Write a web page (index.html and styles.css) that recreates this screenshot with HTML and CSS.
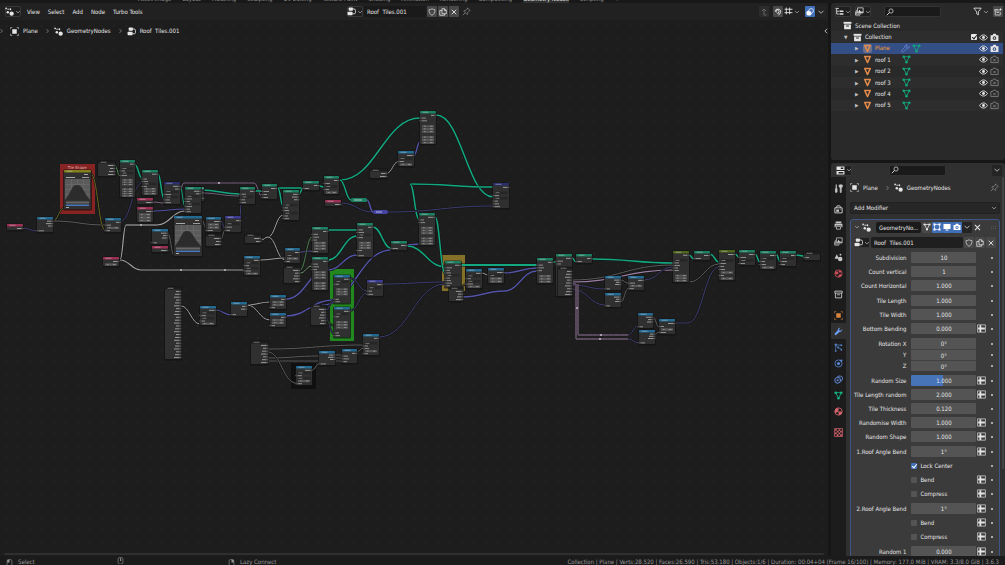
FILE: index.html
```html
<!DOCTYPE html>
<html lang="en">
<head>
<meta charset="utf-8">
<title>Roof Tiles - Geometry Nodes</title>
<link rel="stylesheet" href="styles.css">
</head>
<body>
<svg class="sprite" aria-hidden="true">
  <symbol id="i-down" viewBox="0 0 16 16"><path d="M3 5.5l5 5 5-5" fill="none" stroke="currentColor" stroke-width="2"/></symbol>
  <symbol id="i-right" viewBox="0 0 16 16"><path d="M5 2l6 6-6 6" fill="none" stroke="currentColor" stroke-width="2"/></symbol>
  <symbol id="i-left" viewBox="0 0 16 16"><path d="M11 2L5 8l6 6" fill="none" stroke="currentColor" stroke-width="2"/></symbol>
  <symbol id="i-nodes" viewBox="0 0 16 16"><g fill="currentColor"><circle cx="11.8" cy="11.8" r="3.8"/><circle cx="5" cy="9.5" r="2.2"/><circle cx="9.5" cy="4" r="1.6"/><circle cx="2" cy="2.5" r="1.5"/><circle cx="5.5" cy="3.8" r="1.3"/></g></symbol>
  <symbol id="i-group" viewBox="0 0 16 16"><g fill="currentColor"><rect x="3" y="1" width="7.500" height="5.500" rx="1.200"/><rect x="1" y="8.500" width="9" height="6" rx="1.200"/></g><path d="M10 3.500h2.500a2.500 2.500 0 0 1 2.500 2.500v4a2 2 0 0 1-2 2h-3" fill="none" stroke="currentColor" stroke-width="1.500"/></symbol>
  <symbol id="i-object" viewBox="0 0 16 16"><rect x="4" y="4" width="8" height="8" fill="currentColor"/><path d="M1 4V1h3M12 1h3v3M15 12v3h-3M4 15H1v-3" fill="none" stroke="currentColor" stroke-width="1.300" opacity=".75"/></symbol>
  <symbol id="i-shield" viewBox="0 0 16 16"><path d="M8 1.500C6 3 4 3.200 2 3.200c0 6 2 9.500 6 11.300 4-1.800 6-5.300 6-11.300-2 0-4-.2-6-1.700z" fill="none" stroke="currentColor" stroke-width="1.300"/></symbol>
  <symbol id="i-copy" viewBox="0 0 16 16"><path d="M6 1.500h5l3.500 3.500v6.500H6zM11 1.500V5h3.500M6 5H1.500v9.500H11v-3" fill="none" stroke="currentColor" stroke-width="1.500"/></symbol>
  <symbol id="i-x" viewBox="0 0 16 16"><path d="M3.500 3.500l9 9M12.500 3.500l-9 9" stroke="currentColor" stroke-width="1.800"/></symbol>
  <symbol id="i-pin" viewBox="0 0 16 16"><path d="M9.500 1.500l5 5-1.500.5-3 3 .3 2.500-1 1L3 7.200l1-1 2.500.3 3-3zM6 10l-4.500 4.500" fill="none" stroke="currentColor" stroke-width="1.300"/></symbol>
  <symbol id="i-up" viewBox="0 0 16 16"><path d="M4 6l4-4 4 4M8 2v12h5" fill="none" stroke="currentColor" stroke-width="1.800"/></symbol>
  <symbol id="i-magnet" viewBox="0 0 16 16"><path d="M2.500 7a5.300 5.300 0 1 1 10.200 2.500c-1 2-2.200 3.500-3.700 5M5.500 9a3 3 0 1 1 4.500-1.500c-.6 1.500-1.500 3-3 4.500" fill="none" stroke="currentColor" stroke-width="2"/></symbol>
  <symbol id="i-snap" viewBox="0 0 16 16"><path d="M4 1v12M10 1v12M1 4h14M1 10h14" stroke="currentColor" stroke-width="1.600"/></symbol>
  <symbol id="i-overlay" viewBox="0 0 16 16"><circle cx="6" cy="10" r="5.200" fill="currentColor"/><circle cx="10.300" cy="5.700" r="4.600" fill="none" stroke="currentColor" stroke-width="1.400"/><path d="M6 5a5 5 0 0 1 5 5" fill="none" stroke="#3f6cb5" stroke-width="1.200"/></symbol>
  <symbol id="i-tree" viewBox="0 0 16 16"><path d="M1 2.500h6M3 3v9.500h4M3 7.500h4" fill="none" stroke="currentColor" stroke-width="1.500"/><path d="M8 7.500h7M8 12.500h7" stroke="currentColor" stroke-width="2.600"/></symbol>
  <symbol id="i-images" viewBox="0 0 16 16"><path d="M4.500 1.500h10v9h-10z" fill="none" stroke="currentColor" stroke-width="1.300"/><path d="M2.500 5v7.500H11M1 8v6.500h8" fill="none" stroke="currentColor" stroke-width="1.200"/><path d="M5 10l3-5 3 4 1.500-2 2 3z" fill="currentColor"/></symbol>
  <symbol id="i-search" viewBox="0 0 16 16"><circle cx="10" cy="6" r="4.200" fill="none" stroke="currentColor" stroke-width="1.400"/><path d="M7 9l-5.500 5.500" stroke="currentColor" stroke-width="1.800"/></symbol>
  <symbol id="i-filter" viewBox="0 0 16 16"><path d="M1.500 2h13L9.500 8.500V14l-3-2V8.500z" fill="none" stroke="currentColor" stroke-width="1.500"/></symbol>
  <symbol id="i-new" viewBox="0 0 16 16"><path d="M9 3H1.500v3h10M2.500 6v8h10V8M5 9h5" fill="none" stroke="currentColor" stroke-width="1.400"/><path d="M13 .5v5M10.500 3h5" stroke="currentColor" stroke-width="1.500"/></symbol>
  <symbol id="i-box" viewBox="0 0 16 16"><path d="M1 1.500h14V5H1z" fill="currentColor"/><path d="M2 6h12v8.500H2zM5.500 8v1.800h5V8z" fill="currentColor" fill-rule="evenodd"/></symbol>
  <symbol id="i-boxline" viewBox="0 0 16 16"><path d="M1.500 2h13v3.500h-13zM2.500 5.500V14h11V5.500M5.500 8.500h5" fill="none" stroke="currentColor" stroke-width="1.500"/></symbol>
  <symbol id="i-tri" viewBox="0 0 16 16"><path d="M3 2.500h10L8 13.500z" fill="none" stroke="currentColor" stroke-width="2.600" stroke-linejoin="round"/></symbol>
  <symbol id="i-mesh" viewBox="0 0 16 16"><path d="M3 3h10L8 13z" fill="none" stroke="currentColor" stroke-width="1.500"/><g fill="currentColor"><circle cx="3" cy="3" r="2.200"/><circle cx="13" cy="3" r="2.200"/><circle cx="8" cy="13" r="2.200"/></g></symbol>
  <symbol id="i-wrench" viewBox="0 0 16 16"><path d="M14.500 4l-2.700 2.600-2.300-.5-.5-2.300L11.500 1.300C9 .6 6.500 2.500 6.800 5.600L1.600 11a2 2 0 0 0 0 2.800 2 2 0 0 0 2.800 0l5.200-5.100c3 .5 5.500-2 4.900-4.700z" fill="currentColor"/></symbol>
  <symbol id="i-wrenchline" viewBox="0 0 16 16"><path d="M14.500 4l-2.700 2.600-2.300-.5-.5-2.300L11.500 1.300C9 .6 6.500 2.500 6.800 5.600L1.600 11a2 2 0 0 0 0 2.800 2 2 0 0 0 2.800 0l5.200-5.100c3 .5 5.500-2 4.900-4.700z" fill="none" stroke="currentColor" stroke-width="1.600"/></symbol>
  <symbol id="i-eye" viewBox="0 0 16 16"><path d="M1 8c3.500-6 10.500-6 14 0-3.500 6-10.500 6-14 0z" fill="none" stroke="currentColor" stroke-width="1.700"/><circle cx="8" cy="8" r="2.600" fill="currentColor"/></symbol>
  <symbol id="i-cam" viewBox="0 0 16 16"><path d="M1 4h3.500L6 1.500h4L11.500 4H15v10H1zM8 5.800a3.200 3.200 0 1 0 .01 0z" fill="currentColor" fill-rule="evenodd"/><circle cx="8" cy="9" r="1.500" fill="currentColor"/></symbol>
  <symbol id="i-camoff" viewBox="0 0 16 16"><path d="M1.500 4.500h3L6 2h4l1.500 2.500h3v9h-13zM5.800 6.800l4.400 4.400M10.200 6.800l-4.400 4.400" fill="none" stroke="currentColor" stroke-width="1.400"/></symbol>
  <symbol id="i-props" viewBox="0 0 16 16"><path d="M1 1h14v6H1zM1 9h14v6H1z" fill="currentColor"/><path d="M8.500 2.500H13v3H8.500zM4.500 10.500H13v3H4.500z" fill="#222"/></symbol>
  <symbol id="i-tool" viewBox="0 0 16 16"><path d="M4 1v6M4 8v7" stroke="currentColor" stroke-width="2"/><path d="M2.500 8h3v6.500h-3zM9 1.500v3.500l2 2v8h2V7l2-2V1.500M11 1v3h2V1" fill="currentColor" stroke="currentColor"/></symbol>
  <symbol id="i-render" viewBox="0 0 16 16"><path d="M1.500 5h13v9h-13zM4 5l1.500-3.500h5L12 5" fill="none" stroke="currentColor" stroke-width="1.700"/><path d="M4 8h5v4H4z" fill="currentColor"/><path d="M12 7v2" stroke="currentColor"/></symbol>
  <symbol id="i-output" viewBox="0 0 16 16"><path d="M3 1h10v3H3zM1 5h14v6h-2V8H3v3H1z" fill="currentColor"/><path d="M4.500 9.500h7v5h-7z" fill="none" stroke="currentColor" stroke-width="1.400"/></symbol>
  <symbol id="i-world" viewBox="0 0 16 16"><circle cx="8" cy="8" r="6.500" fill="none" stroke="currentColor" stroke-width="1.500"/><path d="M2 4l5 1 1 3-3 2-3-2zM9 2l4 2-2 3-3-2zM8 11l3-2 3 1-3 4-3 1z" fill="currentColor"/></symbol>
  <symbol id="i-scene" viewBox="0 0 16 16"><path d="M5 2L1 10h8z" fill="currentColor"/><circle cx="11" cy="10.500" r="4" fill="currentColor"/><circle cx="11.500" cy="3" r="1.600" fill="currentColor"/></symbol>
  <symbol id="i-part" viewBox="0 0 16 16"><path d="M3 14V3l4 5 6 3M3 3l10 1" fill="none" stroke="currentColor" stroke-width="1.200"/><g fill="currentColor"><circle cx="3" cy="3" r="2"/><circle cx="13" cy="4" r="1.600"/><circle cx="7.500" cy="8" r="1.800"/><circle cx="13" cy="12" r="1.600"/><circle cx="3" cy="14" r="1.600"/></g></symbol>
  <symbol id="i-phys" viewBox="0 0 16 16"><circle cx="8" cy="8" r="6.300" fill="none" stroke="currentColor" stroke-width="1.400"/><circle cx="8" cy="8" r="2.800" fill="currentColor"/><circle cx="13" cy="3" r="2" fill="currentColor"/></symbol>
  <symbol id="i-cons" viewBox="0 0 16 16"><circle cx="6.500" cy="9.500" r="5" fill="none" stroke="currentColor" stroke-width="1.800"/><circle cx="6.500" cy="9.500" r="2" fill="currentColor"/><path d="M6 4c2-3 7-3 8.500 0S14 10 12 11" fill="none" stroke="currentColor" stroke-width="1.800"/></symbol>
  <symbol id="i-mat" viewBox="0 0 16 16"><circle cx="8" cy="8" r="6.500" fill="none" stroke="currentColor" stroke-width="1.500"/><path d="M8 1.500A6.500 6.500 0 0 0 2 11l6-3zM8 8h6.500A6.500 6.500 0 0 1 8 14.500z" fill="currentColor"/></symbol>
  <symbol id="i-tex" viewBox="0 0 16 16"><path d="M1 1h14v14H1z" fill="none" stroke="currentColor" stroke-width="1.400"/><path d="M2 2h3v3H2zM8 2h3v3H8zM5 5h3v3H5zM11 5h3v3h-3zM2 8h3v3H2zM8 8h3v3H8zM5 11h3v3H5zM11 11h3v3h-3z" fill="currentColor"/></symbol>
  <symbol id="i-edit" viewBox="0 0 16 16"><path d="M3 3h10v10H3z" fill="none" stroke="currentColor" stroke-width="1.300"/><path d="M1 1h4v4H1zM11 1h4v4h-4zM1 11h4v4H1zM11 11h4v4h-4z" fill="currentColor"/></symbol>
  <symbol id="i-screen" viewBox="0 0 16 16"><path d="M1 2h14v10H1zM5 13h6v2H5z" fill="currentColor"/></symbol>
  <symbol id="i-attr" viewBox="0 0 16 16"><path d="M1 1.500h14v13H1z" fill="none" stroke="currentColor" stroke-width="1.500" opacity=".8"/><path d="M6 2v12M2 8h12" stroke="currentColor" stroke-width="3.200"/></symbol>
  <symbol id="i-mouse" viewBox="0 0 16 16"><rect x="2.500" y="1" width="11" height="15" rx="4" fill="none" stroke="currentColor" stroke-width="1.400"/></symbol>
</svg>

<nav class="workspaces">
  <a href="#">Asset Image</a><a href="#">Layout</a><a href="#">Modeling</a><a href="#">Sculpting</a><a href="#">UV Editing</a><a href="#">Texture Paint</a><a href="#">Shading</a><a href="#">Animation</a><a href="#">Rendering</a><a href="#">Compositing</a><a href="#" class="current">Geometry Nodes</a><a href="#">Scripting</a><a href="#">+</a>
</nav>

<main class="workspace">
  <section class="editor">
    <header class="bar node-bar">
      <div class="menus">
        <button class="pick" aria-label="Editor type"><svg><use href="#i-nodes"/></svg><svg class="chev"><use href="#i-down"/></svg></button>
        <button>View</button><button>Select</button><button>Add</button><button>Node</button><button>Turbo Tools</button>
      </div>
      <div class="datablock">
        <button class="pick" aria-label="Browse node tree"><svg><use href="#i-group"/></svg><svg class="chev"><use href="#i-down"/></svg></button>
        <input class="name" type="text" value="Roof  Tiles.001" aria-label="Node tree name">
        <button class="sq" aria-label="Fake user"><svg><use href="#i-shield"/></svg></button>
        <button class="sq" aria-label="Duplicate"><svg><use href="#i-copy"/></svg></button>
        <button class="sq" aria-label="Unlink"><svg><use href="#i-x"/></svg></button>
        <button class="pin" aria-label="Pin"><svg><use href="#i-pin"/></svg></button>
      </div>
      <div class="tools">
        <button class="sq faint" aria-label="Parent tree"><svg><use href="#i-up"/></svg></button>
        <button class="sq" aria-label="Snap"><svg><use href="#i-magnet"/></svg></button>
        <button class="pick flat" aria-label="Snap to"><svg><use href="#i-snap"/></svg><svg class="chev"><use href="#i-down"/></svg></button>
        <button class="sq on" aria-label="Overlays"><svg><use href="#i-overlay"/></svg></button>
        <button class="sq dark" aria-label="Overlay options"><svg class="chev"><use href="#i-down"/></svg></button>
      </div>
    </header>
    <div class="canvas">
      <svg class="graph" id="graph" role="img" aria-label="Node graph"></svg>
      <div class="crumbs">
        <svg class="sep"><use href="#i-right"/></svg>
        <svg><use href="#i-object"/></svg><span>Plane</span>
        <svg class="sep"><use href="#i-right"/></svg>
        <svg><use href="#i-nodes"/></svg><span>GeometryNodes</span>
        <svg class="sep"><use href="#i-right"/></svg>
        <svg><use href="#i-group"/></svg><span>Roof&nbsp; Tiles.001</span>
        <button class="side-toggle" aria-label="Show sidebar"><svg><use href="#i-left"/></svg></button>
      </div>
      <div class="hscroll"></div>
    </div>
  </section>

  <aside class="column">
    <section class="outliner">
      <header class="bar">
        <button class="pick" aria-label="Editor type"><svg><use href="#i-tree"/></svg><svg class="chev"><use href="#i-down"/></svg></button>
        <button class="pick" aria-label="Display mode"><svg><use href="#i-images"/></svg><svg class="chev"><use href="#i-down"/></svg></button>
        <label class="search"><svg><use href="#i-search"/></svg><input type="text" aria-label="Filter outliner"></label>
        <button class="pick flat" aria-label="Filter"><svg><use href="#i-filter"/></svg><svg class="chev"><use href="#i-down"/></svg></button>
        <button class="sq" aria-label="New collection"><svg><use href="#i-new"/></svg></button>
      </header>
      <ul class="tree" id="tree"></ul>
    </section>

    <section class="properties">
      <header class="bar">
        <button class="pick" aria-label="Editor type"><svg><use href="#i-props"/></svg><svg class="chev"><use href="#i-down"/></svg></button>
        <label class="search"><svg><use href="#i-search"/></svg><input type="text" aria-label="Search properties"></label>
        <button class="sq dark" aria-label="Options"><svg class="chev"><use href="#i-down"/></svg></button>
      </header>
      <div class="split">
        <nav class="tabs" id="tabs"></nav>
        <div class="pane">
          <div class="path">
            <svg><use href="#i-object"/></svg><span>Plane</span>
            <svg class="sep"><use href="#i-right"/></svg>
            <svg><use href="#i-nodes"/></svg><span>GeometryNodes</span>
            <button class="pin" aria-label="Pin"><svg><use href="#i-pin"/></svg></button>
          </div>
          <div class="add"><select aria-label="Add Modifier"><option>Add Modifier</option></select><svg class="chev"><use href="#i-down"/></svg></div>
          <div class="modifier">
            <div class="mod-head">
              <button aria-label="Collapse"><svg class="chev"><use href="#i-down"/></svg></button>
              <svg class="kind"><use href="#i-nodes"/></svg>
              <input class="name" type="text" value="GeometryNo..." aria-label="Modifier name">
              <button class="sq" aria-label="On cage"><svg><use href="#i-mesh"/></svg></button>
              <button class="sq on" aria-label="Edit mode"><svg><use href="#i-edit"/></svg></button>
              <button class="sq on" aria-label="Viewport"><svg><use href="#i-screen"/></svg></button>
              <button class="sq on" aria-label="Render"><svg><use href="#i-cam"/></svg></button>
              <button class="sq dark" aria-label="More"><svg class="chev"><use href="#i-down"/></svg></button>
              <button class="close" aria-label="Remove modifier"><svg><use href="#i-x"/></svg></button>
              <span class="grip"></span>
            </div>
            <div class="mod-tree">
              <button class="pick" aria-label="Browse"><svg><use href="#i-group"/></svg><svg class="chev"><use href="#i-down"/></svg></button>
              <input class="name" type="text" value="Roof  Tiles.001" aria-label="Node group">
              <button class="sq" aria-label="Fake user"><svg><use href="#i-shield"/></svg></button>
              <button class="sq" aria-label="Duplicate"><svg><use href="#i-copy"/></svg></button>
              <button class="sq" aria-label="Unlink"><svg><use href="#i-x"/></svg></button>
            </div>
            <form class="fields" id="fields"></form>
          </div>
        </div>
        <div class="vscroll"><span></span></div>
      </div>
    </section>
  </aside>
</main>

<footer class="status">
  <span class="hint"><svg viewBox="0 0 16 16"><use href="#i-mouse"/><path d="M3 2h5v6H3z" fill="currentColor"/></svg>Select</span>
  <span class="hint"><svg viewBox="0 0 16 16"><use href="#i-mouse"/><path d="M7 3h2.500v6H7z" fill="currentColor"/></svg></span>
  <span class="hint"><svg viewBox="0 0 16 16"><use href="#i-mouse"/><path d="M8 2h5v6H8z" fill="currentColor"/></svg>Lazy Connect</span>
  <span class="stats">Collection | Plane | Verts:28.520 | Faces:26.590 | Tris:53.180 | Objects:1/6 | Duration: 00:04+04 (Frame 16/100) | Memory: 177.0 MiB | VRAM: 3.3/8.0 GiB | 3.6.3</span>
</footer>
<script src="app.js"></script>
</body>
</html>
```
FILE: styles.css
```css
* { box-sizing: border-box; }
html, body { height: 100%; }
body {
  margin: 0;
  display: flex;
  flex-direction: column;
  overflow: hidden;
  background: #161616;
  color: #e6e6e6;
  font: 6px/10px "DejaVu Sans Condensed", "DejaVu Sans", sans-serif;
}
button, input, select { font: inherit; color: inherit; border: 0; margin: 0; padding: 0; background: none; }
button { display: inline-flex; align-items: center; justify-content: center; }
input { min-width: 0; }
svg { display: block; flex: none; width: 9px; height: 9px; }
.sprite { position: absolute; width: 0; height: 0; }
svg.chev { width: 6px; height: 6px; color: #b0b0b0; }

/* workspace tabs, scrolled mostly out of view */
.workspaces {
  flex: none;
  display: flex;
  align-items: flex-end;
  gap: 11px;
  height: 3px;
  padding-left: 138px;
  overflow: hidden;
  background: #181818;
}
.workspaces a { color: #909090; text-decoration: none; white-space: nowrap; line-height: 8px; }
.workspaces .current { background: #303030; color: #e8e8e8; }

.workspace { flex: 1; min-height: 0; display: flex; gap: 3px; }

/* shared bars and buttons */
.bar { flex: none; height: 16px; display: flex; align-items: center; }
.pick { height: 11px; width: 16px; gap: 1px; border: 1px solid #383838; border-radius: 2px; background: #1f1f1f; }
.pick.flat { border: 0; background: none; }
.sq { width: 10px; height: 11px; background: #484848; border-radius: 1px; }
.sq svg { width: 8px; height: 8px; }
.sq.on { background: #4270b8; color: #fff; }
.sq.dark { background: #242424; }
.sq.faint { background: #2c2c2c; color: #6a6a6a; }
.name { height: 11px; background: #1a1a1a; padding-left: 3px; white-space: pre; border-radius: 2px; }
.search { display: flex; align-items: center; width: 57px; height: 11px; padding-left: 1px; border: 1px solid #333; border-radius: 2px; background: #1a1a1a; }
.search svg { width: 8px; height: 8px; }
.search input { width: 40px; height: 9px; }
.pin { color: #8a8a8a; width: 12px; }

/* node editor */
.editor { flex: 1; min-width: 0; display: flex; flex-direction: column; background: #1d1d1d; }
.node-bar { display: grid; grid-template-columns: 57fr auto 59fr; background: #212121; padding: 0 2px 0 5px; height: 17px; }
.menus { display: flex; align-items: center; gap: 8px; }
.menus .pick { margin-right: -2px; }
.datablock { display: flex; align-items: center; gap: 1px; }
.datablock .name { width: 62px; }
.tools { display: flex; align-items: center; justify-content: flex-end; gap: 1px; }
.tools .faint { margin-right: 3px; }
.tools .on { margin-left: 4px; }
.canvas {
  flex: 1;
  min-height: 0;
  position: relative;
  display: flex;
  flex-direction: column;
  justify-content: space-between;
  background-image: radial-gradient(circle, #232323 1px, transparent 1px);
  background-size: 12px 12px;
}
.graph { position: absolute; top: -20px; left: 0; width: 100%; height: calc(100% + 20px); }
.crumbs { position: relative; display: flex; align-items: center; gap: 4px; height: 22px; }
.crumbs .sep, .path .sep { width: 5px; height: 6px; margin: 0 0 0 3px; color: #a8a8a8; }
.crumbs .sep:first-child { margin-left: -1px; margin-right: 2px; }
.side-toggle { margin-left: auto; width: 5px; }
.side-toggle svg { width: 6px; height: 6px; }
.hscroll { height: 2px; margin: 0 4px 1px; border-radius: 1px; background: #2f2f2f; }

/* outliner */
.column { flex: none; width: 174px; display: flex; flex-direction: column; gap: 3px; }
.outliner { flex: none; height: 157px; background: #292929; border-radius: 3px; padding-right: 2px; }
.outliner .bar { padding-left: 4px; gap: 4px; height: 17px; }
.outliner .search { margin-left: 9px; margin-right: auto; }
.tree { list-style: none; margin: 0; padding: 0; height: 91px; display: grid; grid-auto-rows: 1fr; }
.tree li { display: flex; align-items: center; gap: 3px; padding: 0 4px 0 24px; }
.tree li:nth-child(even) { background: #2d2d2d; }
.tree li.selected { background: #334f86; }
.tree .root { padding-left: 12px; }
.tree .coll { padding-left: 13px; }
.tree .arrow { width: 5px; color: #c0c0c0; font-size: 5px; }
.tree .coll .arrow { margin-right: 1px; }
.tree .tri { color: #e08a4c; }
.tree .selected .tri { background: #6a6f8a; border-radius: 2px; }
.tree .selected .label { color: #ffa028; }
.tree .label { width: 27px; }
.tree .coll .label, .tree .root .label { width: auto; }
.tree .mesh { color: #13a77c; margin-left: -3px; }
.tree .wr { color: #6482cf; margin-left: -4px; }
.tree .selected .mesh { margin-left: -1px; }
.tree .vis { margin-left: auto; display: flex; align-items: center; gap: 2px; }
.tree .vis .off { color: #8a8a8a; }
.tree .vis svg { width: 9px; height: 9px; }
input[type="checkbox"] { appearance: none; width: 6px; height: 6px; border-radius: 1px; background: #545454; }
.tree input[type="checkbox"]:checked { background: #ececec; }
input[type="checkbox"]:checked::after { content: ""; display: block; width: 2px; height: 4px; margin: 0 auto; border: solid #fff; border-width: 0 1px 1px 0; transform: rotate(40deg); }
.tree input[type="checkbox"]:checked::after { border-color: #222; }

/* properties */
.properties { flex: 1; min-height: 0; display: flex; flex-direction: column; background: #303030; border-radius: 3px 3px 0 0; overflow: hidden; }
.properties .bar { padding: 0 3px 0 5px; justify-content: space-between; height: 14px; }
.properties .bar .search { margin-right: 10px; }
.split { flex: 1; min-height: 0; display: flex; }
.tabs { flex: none; width: 15px; padding-top: 3px; display: flex; flex-direction: column; gap: 5px; background: #1c1c1c; }
.tabs div { display: grid; }
.tabs button { height: 16px; width: 15px; }
.tabs .active { background: #303030; }
.pane { flex: 1; min-width: 0; padding: 6px 1px 0 4px; overflow: hidden; }
.path { display: flex; align-items: center; gap: 4px; height: 9px; }
.path .pin { margin-left: auto; }
.add { display: flex; align-items: center; margin: 10px 0 5px; height: 12px; padding: 0 2px 0 3px; background: #272727; border: 1px solid #222; border-radius: 2px; }
.add select { flex: 1; appearance: none; height: 10px; }
.modifier { border: 1px solid #3d5688; border-radius: 3px; background: #3b3b3b; padding: 0 3px 0 3px; }
.mod-head { display: flex; align-items: center; height: 14px; }
.mod-head .kind { margin: 0 5px 0 2px; }
.mod-head .name { width: 45px; margin-right: 1px; }
.mod-head .close { width: 11px; }
.mod-head .grip { width: 5px; height: 3px; margin-left: auto; border: dotted #555; border-width: 1px 0; }
.mod-tree { display: flex; align-items: center; gap: 1px; margin: 3px 0; }
.mod-tree .name { flex: 1; background: #1f1f1f; }
.fields { display: grid; gap: 4px; padding: 1px 4px 6px 0; }
.block { display: grid; gap: 3px; }
.block.joined { gap: 0; }
.joined .field + .field .value { border-top: 1px solid #424242; }
.field { display: grid; grid-template-columns: 1fr 65px 10px 5px; align-items: center; height: 11px; column-gap: 1px; }
.field > label { text-align: right; white-space: nowrap; padding-right: 4px; justify-self: end; }
.value { width: 100%; height: 11px; text-align: center; background: #545454; border-radius: 1px; }
.value.half { background: linear-gradient(90deg, #4773b9 50%, #545454 50%); }
.check { display: flex; align-items: center; gap: 3px; }
.check input[type="checkbox"]:checked { background: #4270b8; }
.key { width: 2px; height: 2px; border-radius: 1px; background: #d0d0d0; justify-self: end; grid-column: 4; }
.field svg { grid-column: 3; grid-row: 1; color: #e4e4e4; }
.vscroll { width: 4px; padding: 0 1px; }
.vscroll span { display: block; height: 77%; background: #454545; border-radius: 1px; }

/* status bar */
.status { flex: none; height: 9px; display: flex; align-items: flex-start; padding: 1px 6px 0; background: #1b1b1b; color: #989898; overflow: hidden; }
.hint { flex: none; display: flex; align-items: center; gap: 5px; width: 111px; }
.hint svg { width: 7px; height: 7px; }
.stats { margin-left: auto; white-space: nowrap; }
```
FILE: app.js
```javascript
const use = (id, cls = "") => `<svg class="${cls}"><use href="#i-${id}"/></svg>`;

/* ---------- outliner ---------- */
const tree = document.getElementById("tree");
const vis = on => `<span class="vis">${use("eye")}${on ? use("cam") : use("camoff", "off")}</span>`;
let rows = `<li class="root">${use("box")}<span class="label">Scene Collection</span></li>
<li class="coll"><span class="arrow">▼</span>${use("box")}<span class="label">Collection</span>
<span class="vis"><input type="checkbox" checked aria-label="Include collection">${use("eye")}${use("cam")}</span></li>
<li class="selected"><span class="arrow">▶</span>${use("tri", "tri")}<span class="label">Plane</span>${use("wrenchline", "wr")}${use("mesh", "mesh")}${vis(true)}</li>`;
for (let i = 1; i <= 5; i++) {
  rows += `<li><span class="arrow">▶</span>${use("tri", "tri")}<span class="label">roof ${i}</span>${use("mesh", "mesh")}${vis(false)}</li>`;
}
tree.innerHTML = rows;

/* ---------- property tabs ---------- */
const tabs = [
  [["tool", "#c8c8c8"]],
  [["render", "#c8c8c8"], ["output", "#c8c8c8"], ["images", "#c8c8c8"], ["scene", "#c8c8c8"], ["world", "#c9505a"]],
  [["boxline", "#d0d0d0"]],
  [["object", "#d8843c"], ["wrench", "#6c9cf0"], ["part", "#5580c8"], ["phys", "#5b8ad6"], ["cons", "#5b7fc8"], ["mesh", "#12b886"], ["mat", "#d0606a"]],
  [["tex", "#d0606a"]]
];
document.getElementById("tabs").innerHTML = tabs.map(g => "<div>" + g.map(([id, c]) =>
  `<button aria-label="${id}" class="${id === "wrench" ? "active" : ""}" style="color:${c}">${use(id)}</button>`).join("") + "</div>").join("");

/* ---------- modifier inputs: label, value, has attribute toggle ---------- */
const blocks = [
  [["Subdivision", "10"], ["Count vertical", "1"], ["Count Horizontal", "1.000"]],
  [["Tile Length", "1.000"], ["Tile Width", "1.000"], ["Bottom Bending", "0.000", 1]],
  [["Rotation X", "0°"], ["Y", "0°"], ["Z", "0°"]],
  [["Random Size", "1.000", 1], ["Tile Length random", "2.000", 1], ["Tile Thickness", "0.120"], ["Randomise Width", "1.000", 1], ["Random Shape", "1.000", 1]],
  [["1.Roof Angle Bend", "1°", 1], ["Lock Center", true], ["Bend", false, 1], ["Compress", false, 1]],
  [["2.Roof Angle Bend", "1°", 1], ["Bend", false, 1], ["Compress", false, 1]],
  [["Random 1", "0.000", 1]]
];
let n = 0;
document.getElementById("fields").innerHTML = blocks.map((b, bi) =>
  `<div class="block${bi === 2 ? " joined" : ""}">` + b.map(([label, v, attr]) => {
    const id = "p" + n++;
    const body = typeof v === "boolean"
      ? `<span></span><span class="check"><input type="checkbox" id="${id}"${v ? " checked" : ""}><label for="${id}">${label}</label></span>`
      : `<label for="${id}">${label}</label><input class="value${label === "Random Size" ? " half" : ""}" type="text" id="${id}" value="${v}">`;
    return `<div class="field">${body}${attr ? use("attr") : ""}<span class="key"></span></div>`;
  }).join("") + "</div>").join("");

/* ---------- node graph ---------- */
const C = { t: "#1b8062", b: "#226a92", r: "#9c2f55", n: "#2b2f6e", p: "#3d3c94", y: "#80801c", g: "#4c661c", k: "#1c1c1c" };
const T = "#12a880", V = "#5353a8", D = "#3d3d72", W = "#a0a0a0", G = "#5c5c5c", L = "#9d7fa6";

const frames = [
  [60, 164, 35, 50, "#872323"], [330, 269, 24, 72, "#23871f"],
  [442, 255, 23, 36, "#85702a"], [291, 363, 25, 26, "#101010"]
];

/* x1, y1, x2, y2, colour, width */
const links = [
  [23, 228, 37, 231, D, 1], [53, 221, 64, 208, "#68681f", 1], [53, 221, 105, 225, G, 1], [91, 174, 105, 230, "#68681f", 1],
  [115, 166, 120, 176, "#4d8a50", 1], [135, 165, 142, 178, T, 1.5], [121, 221, 142, 183, D, 1], [158, 174, 164, 199, T, 1.5],
  [153, 202, 164, 203, L, 0.8], [153, 211, 185, 209, V, 1.2], [201, 190, 240, 194, T, 1.5], [201, 193, 240, 196, L, 0.7],
  [180, 186, 185, 206, T, 1], [180, 189, 184, 183, L, 0.8], [184, 183, 254, 183, L, 0.8], [254, 183, 262, 196, L, 0.8],
  [120, 260, 126, 225, W, 1.2], [126, 225, 157, 225, W, 1.2], [157, 225, 185, 211, W, 1.2],
  [120, 260, 141, 270, W, 1.2], [141, 270, 244, 270, W, 1.2], [168, 234, 174, 255, G, 1], [202, 220, 206, 228, G, 1],
  [221, 221, 225, 229, D, 1], [221, 239, 225, 230, G, 1], [240, 220, 241, 202, D, 1], [256, 191, 262, 191, T, 1.5],
  [278, 188, 303, 188, T, 1.5], [278, 188, 283, 206, T, 1.5], [299, 194, 303, 188, T, 1.5], [319, 186, 324, 187, T, 1.5],
  [340, 180, 420, 118, T, 1.5], [340, 180, 351, 200, T, 1.4], [341, 203, 373, 212, D, 1], [367, 200, 373, 212, V, 1.5],
  [261, 240, 268, 237, W, 1], [268, 237, 283, 215, W, 1], [268, 237, 285, 260, W, 1], [260, 260, 285, 258, W, 1.1],
  [300, 252, 312, 251, V, 1], [300, 270, 312, 237, "#466f49", 1.1], [300, 273, 312, 266, "#78a078", 1],
  [328, 230, 357, 230, T, 1.5], [328, 260, 357, 236, T, 1.5], [328, 270, 357, 255, V, 1.3], [373, 227, 391, 248, T, 1.5],
  [216, 310, 231, 315, V, 1.2], [247, 305, 270, 302, W, 1.1], [247, 305, 270, 320, W, 1], [286, 299, 329, 268, V, 1.4],
  [286, 316, 333, 300, V, 1.4], [322, 305, 391, 250, V, 1.4], [181, 306, 200, 324, W, 1],
  [350, 278, 367, 291, D, 1], [350, 311, 367, 293, D, 1], [325, 311, 334, 300, D, 1], [325, 317, 334, 334, D, 1], [325, 320, 334, 326, "#355f35", 1],
  [268, 349, 363, 345, G, 1], [268, 358, 319, 356, G, 1], [268, 361, 319, 361, G, 1], [268, 352, 296, 383, G, 1],
  [312, 370, 319, 364, G, 1], [335, 355, 342, 355, G, 1], [335, 358, 342, 358, G, 1], [335, 361, 342, 361, G, 1], [357, 352, 363, 348, G, 1],
  [379, 337, 445, 284, D, 1], [383, 284, 445, 282, D, 1], [387, 173, 398, 162, W, 1], [414, 155, 420, 142, V, 1.4],
  [436, 115, 493, 197, T, 1.5], [410, 184, 493, 187, T, 1.5], [410, 184, 419, 219, T, 1.5], [388, 212, 493, 206, D, 1],
  [407, 245, 419, 244, V, 1.4], [407, 246, 445, 267, T, 1.5], [435, 217, 445, 273, T, 1.5], [461, 265, 537, 265, T, 2],
  [482, 273, 488, 275, W, 1], [504, 273, 537, 268, V, 1.4], [463, 297, 504, 291, V, 1.4], [504, 291, 537, 271, V, 1.4],
  [461, 287, 466, 284, G, 1], [553, 262, 556, 262, T, 1.5], [572, 258, 576, 262, T, 1.5], [592, 259, 673, 263, T, 1.6],
  [572, 280, 673, 265, G, 1], [572, 282, 673, 270, L, 1.2], [572, 285, 605, 289, D, 1], [572, 289, 605, 305, D, 1],
  [621, 280, 628, 283, G, 1], [621, 302, 628, 289, G, 1], [644, 280, 673, 267, D, 1], [689, 255, 694, 259, T, 1.5],
  [689, 282, 719, 264, G, 1], [710, 254, 719, 262, T, 1.5], [735, 254, 739, 257, T, 1.5], [755, 254, 760, 262, T, 1.5],
  [776, 254, 780, 261, T, 1.5], [796, 255, 804, 256, T, 1.5], [572, 284, 576, 284, L, 1], [576, 284, 576, 339, L, 1],
  [576, 339, 628, 339, L, 1], [578, 284, 578, 335, L, 1], [578, 335, 628, 335, L, 1], [628, 335, 638, 326, D, 1],
  [628, 339, 639, 343, D, 1], [653, 317, 659, 327, G, 1], [655, 334, 659, 332, G, 1], [675, 323, 688, 323, D, 1], [688, 323, 719, 267, D, 1]
];

/* x, y, width, height, header, rows: o output, i input, f field, s menu, c curve, - space */
const nodes = [
  [7, 224, 16, 6, "r", "o"], [37, 217, 16, 15, "b", "ooo-i"], [64, 170, 27, 39, "y", "c"],
  [98, 161, 17, 15, "k", "oooo"], [120, 160, 15, 37, "t", "o-sisi-fff-ffff"], [142, 170, 16, 25, "t", "o-iisifff"],
  [137, 198, 16, 6, "r", "o"], [137, 207, 16, 15, "r", "offf"], [105, 218, 16, 14, "b", "oifi"],
  [195, 187, 9, 14, "t", "oo"], [164, 182, 16, 22, "n", "oosisii"], [185, 187, 16, 26, "t", "oosiisiii"],
  [103, 257, 16, 9, "r", "of"], [152, 229, 16, 15, "b", "ooo-i"], [152, 246, 16, 6, "r", "o"],
  [174, 216, 28, 40, "b", "c"], [206, 217, 15, 15, "b", "offi"], [206, 234, 15, 12, "k", "ooo"],
  [225, 216, 16, 16, "p", "osii"], [240, 187, 15, 17, "t", "oisii"], [262, 184, 15, 15, "t", "oiii"],
  [283, 190, 16, 30, "t", "ooo-siisii"], [303, 181, 16, 9, "t", "oi"], [324, 176, 15, 18, "t", "oisif"],
  [325, 200, 16, 6, "r", "o"], [245, 234, 16, 9, "k", "oo"],
  [312, 227, 16, 26, "t", "oiiifffi"], [312, 257, 16, 33, "t", "oiiifff-fff"], [285, 248, 15, 15, "b", "osfi"],
  [284, 266, 16, 17, "k", "ooooo"], [244, 256, 16, 19, "b", "osisif"], [357, 223, 16, 34, "t", "oiisi-fffi-i"],
  [391, 241, 16, 9, "t", "oi"], [334, 275, 16, 28, "b", "osi-fff-ii"], [334, 307, 16, 30, "b", "osi-fff-ii"],
  [367, 280, 16, 16, "p", "osii"], [270, 295, 16, 14, "b", "offi"], [270, 313, 16, 14, "b", "offi"],
  [231, 302, 16, 14, "b", "oo-i"], [200, 306, 16, 19, "b", "osisif"], [165, 287, 16, 72, "k", "oooooooooooooooooooooooo"],
  [311, 305, 15, 20, "k", "oooooo"], [251, 341, 17, 23, "k", "ooooooo"], [296, 366, 16, 19, "b", "osisfi"],
  [319, 351, 16, 14, "b", "ooo-i"], [342, 349, 15, 14, "b", "oiii"], [363, 334, 16, 21, "b", "o-siifi"],
  [420, 111, 16, 33, "t", "oii-fff-fff"], [398, 151, 16, 15, "b", "osif"], [370, 169, 17, 9, "k", "oo"],
  [493, 183, 16, 25, "n", "o-sisiii"], [419, 213, 16, 32, "t", "oii-fff-fff"], [445, 261, 16, 26, "t", "oiiisiiii"],
  [449, 287, 14, 14, "k", "oooo"], [466, 269, 16, 19, "b", "osisif"], [488, 268, 16, 15, "b", "osff"],
  [537, 258, 16, 25, "t", "oiii-fff"], [556, 254, 16, 42, "t", "oii-----------"], [558, 267, 14, 29, "k", "ooooooooo"],
  [576, 254, 16, 9, "t", "oi"], [605, 276, 16, 14, "b", "ooo-i"], [605, 293, 16, 14, "b", "ooo-i"],
  [628, 276, 16, 14, "b", "oifi"], [673, 251, 16, 31, "g", "o-siiii-fff"], [694, 251, 16, 9, "t", "oi"],
  [719, 250, 16, 30, "g", "o-siiifif"], [739, 250, 16, 15, "t", "oisi"], [760, 251, 16, 18, "t", "osiif"],
  [780, 251, 16, 15, "t", "osii"], [804, 252, 16, 8, "k", "i"], [638, 313, 15, 15, "b", "ooo-i"],
  [639, 330, 16, 14, "b", "ooo-i"], [659, 319, 16, 15, "b", "oifi"]
];

const rect = (x, y, w, h, f, extra = "") => `<rect x="${x}" y="${y}" width="${w}" height="${h}" fill="${f}" ${extra}/>`;
let out = frames.map(([x, y, w, h, c]) => rect(x, y, w, h, c)).join("");
out += `<text x="77" y="169" font-size="4" text-anchor="middle" fill="#e0b0b0">Tile Shape</text>`;

for (const [x1, y1, x2, y2, c, w] of links) {
  const dx = Math.abs(x2 - x1) * 0.45;
  out += `<path d="M${x1} ${y1}C${x1 + dx} ${y1} ${x2 - dx} ${y2} ${x2} ${y2}" fill="none" stroke="#141414" stroke-width="${w + 1}"/>`;
  out += `<path d="M${x1} ${y1}C${x1 + dx} ${y1} ${x2 - dx} ${y2} ${x2} ${y2}" fill="none" stroke="${c}" stroke-width="${w}"/>`;
}

function curveNode(x, y, w) {
  let s = rect(x + w - 7, y + 4, 4, 1, "#aaa") + rect(x + 2, y + 7, 9, 1, "#aaa") + rect(x + w - 9, y + 7, 7, 1, "#999");
  s += rect(x + 1, y + 9, w - 2, 21, "#5a5a5a");
  for (let i = 1; i < 4; i++) {
    s += rect(x + 1 + i * 6, y + 9, 0.4, 21, "#777") + rect(x + 1, y + 9 + i * 5, w - 2, 0.4, "#777");
  }
  s += `<path d="M${x + 1} ${y + 30}C${x + 8} ${y + 22} ${x + 7} ${y + 15} ${x + 13} ${y + 15}S${x + 19} ${y + 22} ${x + w - 1} ${y + 30}z" fill="#2c2c2c"/>`;
  s += rect(x + 2, y + 31.5, w - 4, 2, "#666") + rect(x + 2, y + 34.5, w - 4, 1.5, "#4a78bd") + rect(x + 2, y + 37, 3, 1, "#aaa");
  return s;
}

for (const [x, y, w, h, c, spec] of nodes) {
  out += rect(x - 1, y - 0.5, w + 2, h + 2, "#121212", 'rx="1.5" opacity=".7"');
  out += rect(x, y, w, h, "#303030", 'rx=".8"') + rect(x, y, w, 2.4, C[c], 'rx=".8"');
  out += rect(x + 2.500, y + 0.8, 6, 0.8, "#d8d8d8", 'opacity=".55"');
  if (spec === "c") { out += curveNode(x, y, w); continue; }
  const step = (h - 3) / spec.length;
  [...spec].forEach((k, i) => {
    const ry = y + 3 + i * step, m = ry + step / 2 - 0.5;
    const len = 3.500 + (i * 7 + x) % 3;
    if (k === "o") out += rect(x + w - len - 1.5, m, len, 1, "#989898") + rect(x + w - 0.6, m, 1, 1, "#707070");
    if (k === "i") out += rect(x + 1.5, m, len, 1, "#8c8c8c") + rect(x - 0.6, m, 1, 1, "#707070");
    if (k === "f") out += rect(x + 2, ry + 0.3, w - 4, step - 0.5, "#575757") + rect(x + 4, m, 1.5, 0.8, "#999") + rect(x + w - 6, m, 2.5, 0.8, "#999");
    if (k === "s") out += rect(x + 1.5, ry, w - 3, step - 0.2, "#262626") + rect(x + 2.5, m, 4, 0.8, "#848484");
  });
}
out += rect(351, 198, 16, 4, C.t, 'rx="1.500"') + rect(354, 199.5, 8, 1, "#b0c8c0");
out += rect(373, 210, 15, 4, "#4644a4", 'rx="2"') + rect(376, 211.5, 6, 1, "#b4b4d8");
for (const [x, y] of [[141, 225], [181, 270], [219, 183], [225, 270], [577, 308], [601, 335], [600, 339]]) {
  out += `<circle cx="${x}" cy="${y}" r="1" fill="#c4b4c8"/>`;
}
document.getElementById("graph").innerHTML = out;
```
